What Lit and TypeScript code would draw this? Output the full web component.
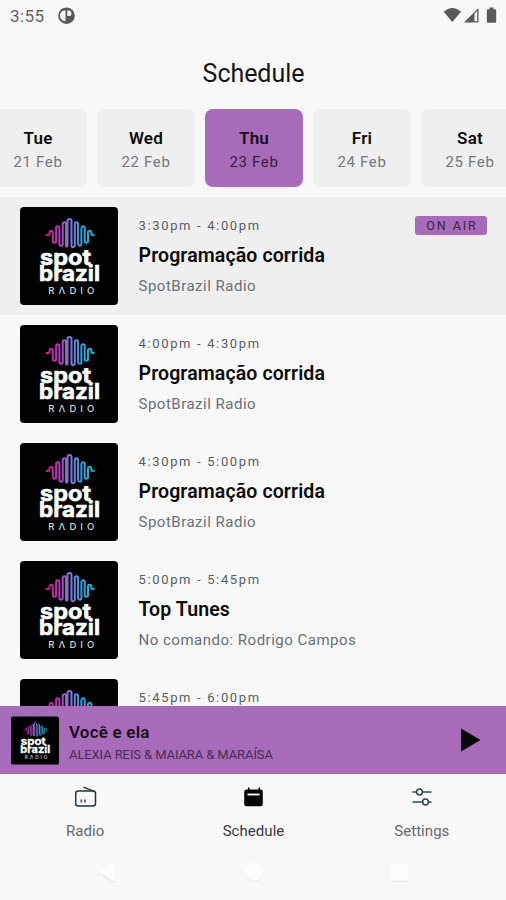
import { LitElement, html, css, svg } from "lit";
import { customElement, property } from "lit/decorators.js";
import { classMap } from "lit/directives/class-map.js";

interface Day { name: string; date: string; active?: boolean }
interface Show { time: string; title: string; host: string; live?: boolean }

const DAYS: Day[] = [
  { name: "Tue", date: "21 Feb" },
  { name: "Wed", date: "22 Feb" },
  { name: "Thu", date: "23 Feb", active: true },
  { name: "Fri", date: "24 Feb" },
  { name: "Sat", date: "25 Feb" },
];

const SHOWS: Show[] = [
  { time: "3:30pm - 4:00pm", title: "Programação corrida", host: "SpotBrazil Radio", live: true },
  { time: "4:00pm - 4:30pm", title: "Programação corrida", host: "SpotBrazil Radio" },
  { time: "4:30pm - 5:00pm", title: "Programação corrida", host: "SpotBrazil Radio" },
  { time: "5:00pm - 5:45pm", title: "Top Tunes", host: "No comando: Rodrigo Campos" },
  { time: "5:45pm - 6:00pm", title: "Programação corrida", host: "SpotBrazil Radio" },
];

/** Square station artwork: waveform above the station name. */
@customElement("station-art")
export class StationArt extends LitElement {
  static styles = css`
    :host { display: block; flex: none; width: 98px; height: 98px; }
    svg { display: block; width: 100%; height: 100%; }
    .name { font-family: "Inter", "Open Sans", sans-serif; font-weight: 700; fill: #fff; stroke: #fff; stroke-width: 0.6; }
    .radio { font-family: "Inter", sans-serif; font-weight: 500; fill: #d8d8d8; }
  `;
  render() {
    return html`<svg viewBox="0 0 98 98">
      <defs>
        <linearGradient id="wave" gradientUnits="userSpaceOnUse" x1="26" y1="0" x2="73" y2="0">
          <stop offset="0" stop-color="#d3109a"></stop>
          <stop offset="0.25" stop-color="#b535b4"></stop>
          <stop offset="0.5" stop-color="#7c78d8"></stop>
          <stop offset="0.8" stop-color="#2aa6dc"></stop>
          <stop offset="1" stop-color="#12b5cc"></stop>
        </linearGradient>
      </defs>
      <rect width="98" height="98" rx="4" fill="#000"></rect>
      <path fill="none" stroke="url(#wave)" stroke-width="2" stroke-linecap="round" stroke-linejoin="round"
        d="M26.500 28h1.500q1.500 0 1.500-1.500v-1a1.650 1.650 0 0 1 3.300 0v8.500a1.650 1.650 0 0 0 3.300 0V21a1.650 1.650 0 0 1 3.300 0v16a1.650 1.650 0 0 0 3.300 0V17a1.650 1.650 0 0 1 3.300 0v21.500M47.500 38.500V14a2 2 0 0 1 4 0v24.500a1.650 1.650 0 0 0 3.300 0V17a1.650 1.650 0 0 1 3.300 0v20a1.650 1.650 0 0 0 3.300 0V21a1.650 1.650 0 0 1 3.300 0v13a1.650 1.650 0 0 0 3.300 0v-8.500a1.650 1.650 0 0 1 3.300 0v1q0 1.500 1.500 1.500h1M45.800 38.500a.9 1.650 0 0 0 1.700 0"></path>
      <text class="name" x="20" y="57.500" font-size="21.500" textLength="51" lengthAdjust="spacingAndGlyphs">spot</text>
      <text class="name" x="19" y="73.500" font-size="21.500" textLength="61" lengthAdjust="spacingAndGlyphs">brazil</text>
      <text class="radio" x="28.300" y="86.500" font-size="9.500" textLength="46" lengthAdjust="spacing">R<tspan>Λ</tspan>DIO</text>
    </svg>`;
  }
}

@customElement("day-card")
export class DayCard extends LitElement {
  @property({ attribute: false }) day!: Day;
  static styles = css`
    :host { display: block; flex: none; width: 98px; }
    .card { box-sizing: border-box; height: 78px; padding-top: 18px; border-radius: 8px; background: #efefef; text-align: center; }
    .name { font-size: 17px; line-height: 23px; font-weight: 600; color: #0c0c0c; letter-spacing: 0.2px; }
    .date { font-size: 15px; line-height: 24px; color: #74787c; letter-spacing: 0.65px; }
    .active { background: #a76bb9; }
    .active .name { color: #1b0c20; }
    .active .date { color: #39213f; }
  `;
  render() {
    return html`<div class=${classMap({ card: true, active: !!this.day.active })}>
      <div class="name">${this.day.name}</div>
      <div class="date">${this.day.date}</div>
    </div>`;
  }
}

@customElement("show-row")
export class ShowRow extends LitElement {
  @property({ attribute: false }) show!: Show;
  static styles = css`
    :host { display: block; flex: none; }
    .row { box-sizing: border-box; display: flex; gap: 20.500px; height: 118px; padding: 10px 19px 10px 20px; }
    .live { background: #efefef; }
    .info { flex: 1; padding-top: 9px; }
    .top { display: flex; justify-content: space-between; height: 19px; }
    .time { font-size: 13px; line-height: 20px; letter-spacing: 1.65px; color: #5a5d60; }
    .badge { box-sizing: border-box; width: 72px; height: 19px; border-radius: 3px; background: #a76bb9; color: #3d2544; font-size: 12.5px; line-height: 20px; letter-spacing: 1.9px; text-align: center; padding-left: 2px; }
    .title { margin-top: 8px; font-size: 19.5px; line-height: 26px; font-weight: 600; color: #0b0b0b; letter-spacing: 0.12px; white-space: nowrap; }
    .host { margin-top: 5px; font-size: 15px; line-height: 24px; color: #687176; letter-spacing: 0.5px; white-space: nowrap; }
  `;
  render() {
    const s = this.show;
    return html`<div class=${classMap({ row: true, live: !!s.live })}>
      <station-art></station-art>
      <div class="info">
        <div class="top">
          <div class="time">${s.time}</div>
          ${s.live ? html`<div class="badge">ON AIR</div>` : null}
        </div>
        <div class="title">${s.title}</div>
        <div class="host">${s.host}</div>
      </div>
    </div>`;
  }
}

const TABS = [
  {
    label: "Radio",
    icon: svg`<g fill="none" stroke="#20343f" stroke-width="1.500"><rect x="2.700" y="6.900" width="19.800" height="15" rx="2.500"></rect><path d="M11 3.400L20 6.900" stroke-linecap="round"></path></g><path d="M7.500 15.500h1.700v3H7.500zM11 15.500h1.700v3H11z" fill="#4b5960"></path>`,
  },
  {
    label: "Schedule",
    active: true,
    icon: svg`<path fill="#050505" d="M5.700 5.500H7V3.500h1.500v2h9v-2H19v2h.3A2.500 2.500 0 0 1 21.800 8v11.800a2.500 2.500 0 0 1-2.500 2.500H5.700a2.500 2.500 0 0 1-2.500-2.500V8a2.500 2.500 0 0 1 2.500-2.500z"></path><path d="M6.500 10.500h12" stroke="#f8f8f8" stroke-width="1.900"></path>`,
  },
  {
    label: "Settings",
    icon: svg`<g fill="none" stroke="#34454e" stroke-width="1.500" stroke-linecap="round"><path d="M4 8h3.500M13.500 8H22M4 18h9.500M19.500 18h2.500"></path><circle cx="10.500" cy="8" r="2.900"></circle><circle cx="16.500" cy="18" r="2.900"></circle></g>`,
  },
];

@customElement("app-root")
export class AppRoot extends LitElement {
  static styles = css`
    :host { display: flex; flex-direction: column; width: 506px; height: 900px; overflow: hidden; background: #f8f8f8; font-family: "Roboto", sans-serif; }
    .status { display: flex; align-items: center; height: 32px; padding: 0 8px 0 10px; box-sizing: border-box; flex: none; }
    .clock { font-size: 17px; line-height: 32px; color: #626262; letter-spacing: 0.45px; width: 47px; white-space: nowrap; }
    .spacer { flex: 1; }
    svg { display: block; }
    h1 { margin: 0; height: 77px; font-size: 25px; line-height: 83px; font-weight: 400; text-align: center; color: #151515; letter-spacing: -0.05px; padding-left: 1px; flex: none; }
    .days { display: flex; gap: 10px; margin-left: -11px; height: 88px; flex: none; }
    .list { height: 509px; flex: none; overflow: hidden; display: flex; flex-direction: column; }
    .player { display: flex; align-items: center; height: 68px; flex: none; background: #a76bb9; padding: 0 25px 0 11px; }
    .player station-art { width: 48px; height: 49px; }
    .track { margin-left: 10px; flex: 1; padding-top: 6px; }
    .song { font-size: 17px; line-height: 22px; font-weight: 600; color: #1a0c1e; letter-spacing: 0.2px; }
    .artist { font-size: 13px; line-height: 23px; font-weight: 400; letter-spacing: -0.1px; color: #4a2c53; white-space: nowrap; }
    .tabs { display: flex; height: 74px; flex: none; padding: 10px 0 0 1px; box-sizing: border-box; }
    .tab { width: 168.500px; display: flex; flex-direction: column; align-items: center; font-size: 15px; line-height: 20px; color: #66696c; letter-spacing: 0.05px; }
    .tab svg { margin-bottom: 12px; }
    .tab.active { color: #3a3a3a; }
    .sys { display: flex; justify-content: space-between; align-items: center; padding: 0 96px 0 97px; height: 47px; }
  `;
  render() {
    return html`
      <div class="status">
        <div class="clock">3:55</div>
        <svg width="18" height="18" viewBox="0 0 18 18">
          <circle cx="9.500" cy="8.700" r="8.300" fill="#5a5a5a"></circle>
          <path d="M8.500 3.500v10.400H7A5.400 5.400 0 0 1 7 3.500z" fill="#f8f8f8"></path>
          <path d="M10.300 3.500h2a2.700 2.700 0 0 1 2.200 2.700v.6a2.200 2.200 0 0 1-2.200 2.200h-2z" fill="#f8f8f8"></path>
        </svg>
        <div class="spacer"></div>
        <svg width="56" height="20" viewBox="0 0 56 20">
          <path d="M1.700 5.800Q10.300-1.800 19 5.800L10.300 16z" fill="#5a5a5a"></path>
          <path d="M22 16.500L36.500 2v14.500z" fill="#5a5a5a"></path>
          <path d="M32.500 7.700l2.700-2.600v10.200H32.500z" fill="#f8f8f8"></path>
          <path d="M47.500 1.500h4v1.700H53q1.200 0 1.200 1.200v11.200q0 1.200-1.200 1.200h-7q-1.200 0-1.200-1.200V4.400q0-1.200 1.200-1.200h1.500z" fill="#5a5a5a"></path>
        </svg>
      </div>
      <h1>Schedule</h1>
      <div class="days">${DAYS.map((d) => html`<day-card .day=${d}></day-card>`)}</div>
      <div class="list">${SHOWS.map((s) => html`<show-row .show=${s}></show-row>`)}</div>
      <div class="player">
        <station-art></station-art>
        <div class="track">
          <div class="song">Você e ela</div>
          <div class="artist">ALEXIA REIS &amp; MAIARA &amp; MARAÍSA</div>
        </div>
        <svg width="20" height="24" viewBox="0 0 20 24"><path d="M0 .5L19.500 12 0 23.500z" fill="#080808"></path></svg>
      </div>
      <div class="tabs">
        ${TABS.map((t) => html`<div class=${classMap({ tab: true, active: !!t.active })}>
          <svg width="25" height="25" viewBox="0 0 25 25">${t.icon}</svg>
          <span>${t.label}</span>
        </div>`)}
      </div>
      <div class="sys">
        <svg width="20" height="24" viewBox="0 0 20 24"><path d="M1.500 12.500L18 23" stroke="#e9e9e9" stroke-width="1.500"></path><path d="M1 11.500L17.500 3v19z" fill="#fefefe"></path></svg>
        <svg width="20" height="24" viewBox="0 0 20 24"><circle cx="10.500" cy="12.600" r="9" fill="#e9e9e9"></circle><circle cx="10.500" cy="11.600" r="9" fill="#fefefe"></circle></svg>
        <svg width="20" height="24" viewBox="0 0 20 24"><path d="M1 4h17v18H1z" fill="#ececec"></path><path d="M1 3.500h17v17H1z" fill="#fefefe"></path></svg>
      </div>
    `;
  }
}
